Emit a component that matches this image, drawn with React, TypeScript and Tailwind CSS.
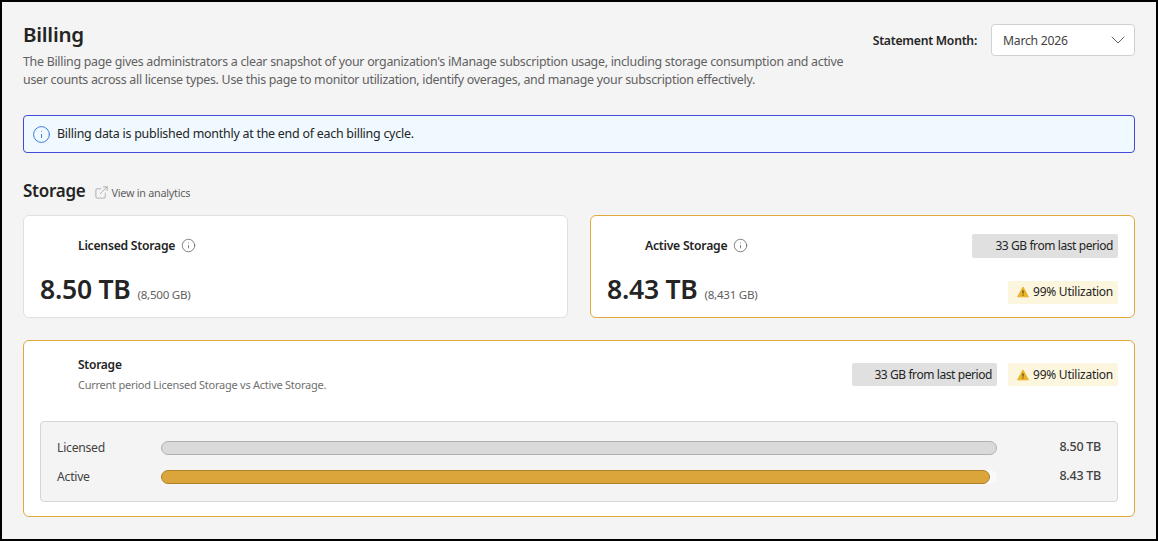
import { ChevronDown, ExternalLink, Info } from "lucide-react";

function DeltaBadge({ className }: { className: string }) {
  return (
    <span className={`flex items-center justify-end rounded-[2px] bg-[#e0e0e0] pr-[5px] text-[12px] tracking-[-0.42px] text-[#242424] ${className}`}>
      33 GB from last period
    </span>
  );
}

function UtilBadge() {
  return (
    <span className="flex h-[23px] w-[110px] items-center justify-end gap-[4px] rounded-[2px] bg-[#fdf6df] pr-[5px] text-[12px] text-[#242424]">
      <svg viewBox="0 0 12 12" className="h-3 w-3">
        <path d="M6 1 11.4 10.8H.6Z" fill="#eab32a" stroke="#eab32a" strokeLinejoin="round" />
        <path d="M6 4.4V7.6M6 8.6V9.6" stroke="#3d3210" strokeWidth="1" />
      </svg>
      99% Utilization
    </span>
  );
}

function StatCard({
  title,
  value,
  gb,
  warn,
}: {
  title: string;
  value: string;
  gb: string;
  warn?: boolean;
}) {
  return (
    <div
      className={`flex h-[103px] flex-1 flex-col rounded-[6px] border bg-white pl-4 pr-4 ${
        warn ? "border-[#e0a93b]" : "border-[#e0e0e0]"
      }`}
    >
      <div className="flex h-[42px] items-start justify-between pt-[18px]">
        <div className="ml-[38px] flex h-[24px] items-center gap-[6px]">
          <span className="text-[12.2px] font-semibold text-[#242424]">{title}</span>
          <Info size={15} strokeWidth={1.25} className="-mt-[2px] text-[#616161]" />
        </div>
        {warn && <DeltaBadge className="h-[24px] w-[146px]" />}
      </div>
      <div className="mt-[11px] flex items-center justify-between">
        <div className="flex items-baseline gap-[7px] leading-[40px]">
          <span className="text-[26.5px] font-semibold text-[#242424]">{value}</span>
          <span className="text-[11.6px] text-[#616161]">{gb}</span>
        </div>
        {warn && <UtilBadge />}
      </div>
    </div>
  );
}

function Bar({ label, value, fill }: { label: string; value: string; fill: string }) {
  return (
    <div className="flex h-[29px] items-center">
      <span className="w-[104px] pt-[1px] text-[12.2px] text-[#424242]">{label}</span>
      <div className="h-[14px] w-[836px] rounded-full bg-[#fafafa]">
        <div className={`h-full rounded-full border ${fill}`} />
      </div>
      <span className="flex-1 text-right text-[12.5px] font-medium text-[#424242]">{value}</span>
    </div>
  );
}

export default function App() {
  return (
    <div className="h-[541px] w-[1158px] overflow-hidden border-2 border-black bg-[#f4f4f4] px-[21px] font-['Noto_Sans',sans-serif] tracking-[-0.25px]">
      <div className="flex items-start justify-between pt-[18px]">
        <div>
          <h1 className="text-[20.5px] leading-[28px] font-semibold text-[#242424]">Billing</h1>
          <p className="mt-[5px] w-[826px] text-[12.4px] leading-[18px] tracking-[-0.28px] text-[#616161]">
            The Billing page gives administrators a clear snapshot of your organization's iManage subscription usage, including storage consumption and active user counts across all license types. Use this page to monitor utilization, identify overages, and manage your subscription effectively.
          </p>
        </div>
        <div className="mt-[4px] flex items-center gap-[14px]">
          <span className="pt-[2px] text-[12.2px] font-semibold text-[#242424]">Statement Month:</span>
          <div className="flex h-[32px] w-[144px] items-center justify-between rounded-[4px] border border-[#d1d1d1] bg-white pr-[4px] pl-[11px] text-[12.2px] text-[#424242]">
            <span className="pt-[2px]">March 2026</span>
            <ChevronDown size={24} strokeWidth={1} className="text-[#616161]" />
          </div>
        </div>
      </div>

      <div className="mt-[26px] flex h-[38px] items-center gap-[6px] rounded-[4px] border border-[#4549d8] bg-[#eff9ff] pl-[8px] text-[12.45px] text-[#242424]">
        <Info size={19} strokeWidth={1.15} className="text-[#2a6fd6]" />
        Billing data is published monthly at the end of each billing cycle.
      </div>

      <div className="mt-[25px] flex h-[26px] items-center gap-[8px]">
        <h2 className="text-[17px] font-semibold text-[#242424]">Storage</h2>
        <span className="flex items-center gap-[3px] pt-[4px] text-[10.8px] text-[#616161]">
          <ExternalLink size={15} strokeWidth={1} className="-mt-[2px] text-[#8a8a8a]" />
          View in analytics
        </span>
      </div>

      <div className="mt-[11px] flex gap-[22px]">
        <StatCard title="Licensed Storage" value="8.50 TB" gb="(8,500 GB)" />
        <StatCard title="Active Storage" value="8.43 TB" gb="(8,431 GB)" warn />
      </div>

      <div className="mt-[22px] h-[177px] rounded-[6px] border border-[#e0a93b] bg-white px-4 pt-[14px]">
        <div className="flex items-start justify-between">
          <div className="ml-[38px]">
            <h3 className="text-[12px] leading-[20px] font-semibold text-[#242424]">Storage</h3>
            <p className="text-[11px] leading-[20px] text-[#707070]">Current period Licensed Storage vs Active Storage.</p>
          </div>
          <div className="mt-[8px] flex gap-[11px]">
            <DeltaBadge className="h-[23px] w-[145px]" />
            <UtilBadge />
          </div>
        </div>
        <div className="mt-[26px] h-[81px] rounded-[4px] border border-[#d6d6d6] bg-[#f4f4f4] px-4 pt-[11px]">
          <Bar label="Licensed" value="8.50 TB" fill="w-full border-[#b0b0b0] bg-[#dadada]" />
          <Bar label="Active" value="8.43 TB" fill="w-[99.2%] border-[#ad8228] bg-[#dba53b]" />
        </div>
      </div>
    </div>
  );
}
